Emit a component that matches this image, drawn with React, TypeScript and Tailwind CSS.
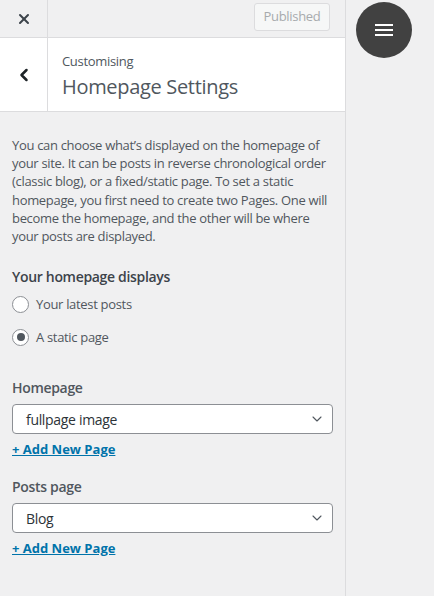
import { ChevronDown, ChevronLeft, X } from 'lucide-react';

function PageSelect({ label, value }: { label: string; value: string }) {
  return (
    <div>
      <div className="text-[14px] font-semibold leading-[20px] text-[#50575e]">{label}</div>
      <div className="mt-[6px] flex h-[30px] w-[321px] items-center justify-between rounded-[4px] border border-[#8c8f94] bg-white pl-[13px] pr-[7px]">
        <span className="text-[14px] text-[#2c3338]">{value}</span>
        <ChevronDown className="h-[16px] w-[16px] text-[#50575e]" strokeWidth={1.6} />
      </div>
      <a href="#" className="mt-[5px] inline-block text-[13px] font-bold leading-[20px] tracking-normal text-[#0073aa] underline">
        + Add New Page
      </a>
    </div>
  );
}

function Radio({ label, checked }: { label: string; checked?: boolean }) {
  return (
    <label className="flex items-center gap-[7px]">
      <span className="flex h-[17px] w-[17px] items-center justify-center rounded-full border border-[#8c8f94] bg-white">
        {checked && <span className="h-[8px] w-[8px] rounded-full bg-[#50575e]" />}
      </span>
      <span className="text-[13px] text-[#50575e]">{label}</span>
    </label>
  );
}

export default function App() {
  return (
    <div className="relative flex h-[596px] w-[434px] bg-[#f0f0f1] font-['Open_Sans',sans-serif] tracking-[-0.02em]">
      <div className="flex h-full w-[346px] flex-col border-r border-[#dcdcde]">
        {/* top bar */}
        <div className="flex h-[38px] items-stretch border-b border-[#dcdcde]">
          <div className="flex w-[48px] items-center justify-center border-r border-[#dcdcde]">
            <X className="h-[16px] w-[16px] text-[#3c434a]" strokeWidth={3} />
          </div>
          <div className="flex flex-1 items-start justify-end pr-[15px] pt-[3px]">
            <div className="flex h-[28px] w-[76px] items-center justify-center rounded-[3px] border border-[#dcdcde] bg-[#f6f7f7] text-[13px] text-[#a7aaad]">
              Published
            </div>
          </div>
        </div>

        {/* section header */}
        <div className="flex h-[74px] border-b border-[#dcdcde] bg-white">
          <div className="flex w-[48px] items-center justify-center border-r border-[#dcdcde]">
            <ChevronLeft className="h-[20px] w-[20px] text-[#1d2327]" strokeWidth={3} />
          </div>
          <div className="flex flex-col pl-[14px] pt-[13px]">
            <span className="text-[13px] leading-[20px] text-[#50575e]">Customising</span>
            <span className="mt-[3px] text-[20px] leading-[26px] text-[#50575e]">Homepage Settings</span>
          </div>
        </div>

        {/* content */}
        <div className="px-[12px] pt-[24px]">
          <p className="text-[13px] leading-[18.2px] text-[#50575e]">
            You can choose what’s displayed on the homepage of your site. It can be posts in reverse chronological order
            (classic blog), or a fixed/static page. To set a static homepage, you first need to create two Pages. One will
            become the homepage, and the other will be where your posts are displayed.
          </p>

          <div className="mt-[22px] text-[14px] font-semibold leading-[20px] text-[#3c434a]">Your homepage displays</div>
          <div className="mt-[8px] flex flex-col gap-[13px]">
            <Radio label="Your latest posts" />
            <Radio label="A static page" checked />
          </div>

          <div className="mt-[31px] flex flex-col gap-[17px]">
            <PageSelect label="Homepage" value="fullpage image" />
            <PageSelect label="Posts page" value="Blog" />
          </div>
        </div>
      </div>

      {/* floating menu button over preview */}
      <div className="absolute left-[356px] top-[2px] flex h-[56px] w-[56px] flex-col items-center justify-center gap-[3px] rounded-full bg-[#414141]">
        <span className="h-[2px] w-[18px] bg-white" />
        <span className="h-[2px] w-[18px] bg-white" />
        <span className="h-[2px] w-[18px] bg-white" />
      </div>
    </div>
  );
}
